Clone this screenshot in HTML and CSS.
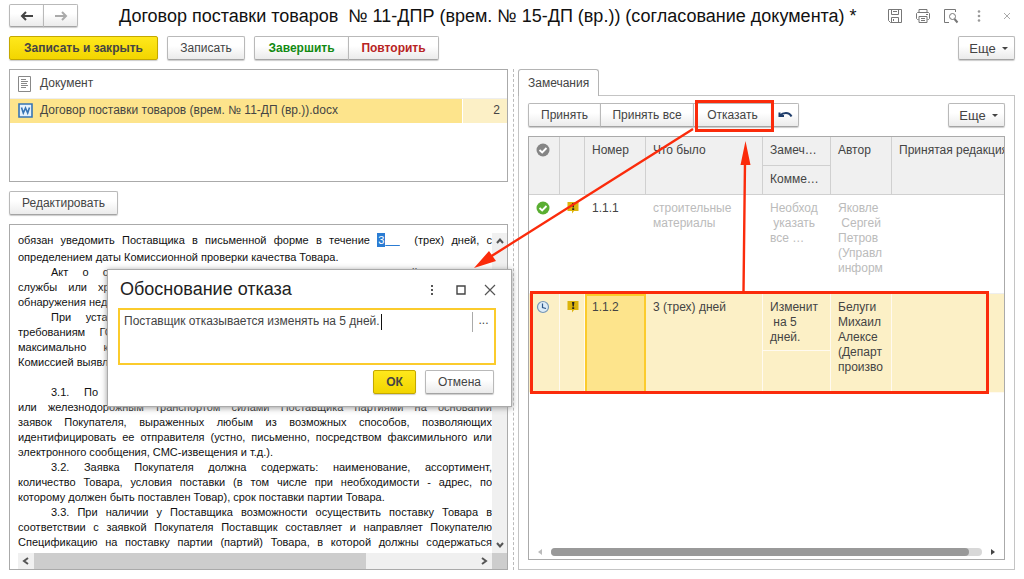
FILE: index.html
```html
<!DOCTYPE html>
<html lang="ru">
<head>
<meta charset="utf-8">
<title>Договор поставки товаров</title>
<link rel="stylesheet" href="styles.css">
</head>
<body>
<div class="page">
  <header class="titlebar">
    <div class="group nav">
      <button class="btn" type="button" aria-label="Назад"><svg width="14" height="10" viewBox="0 0 14 10"><path d="M13 5H3M6 1L2 5l4 4" fill="none" stroke="#444" stroke-width="2"/></svg></button>
      <button class="btn" type="button" aria-label="Вперед"><svg width="14" height="10" viewBox="0 0 14 10"><path d="M1 5h10M8 1l4 4-4 4" fill="none" stroke="#aaa" stroke-width="2"/></svg></button>
    </div>
    <h1 class="title">Договор поставки товаров &nbsp;№ 11-ДПР (врем. № 15-ДП (вр.)) (согласование документа) *</h1>
    <div class="tools">
      <button class="icon-btn" type="button" aria-label="Сохранить"><svg width="16" height="16" viewBox="0 0 16 16" fill="none" stroke="#777"><path d="M1.500 1.500h13v13h-11l-2-2z"/><path d="M4.500 1.500v5h7v-5M6 3.500h4M4.500 14.500v-5h7v5M6.500 11v2"/></svg></button>
      <button class="icon-btn" type="button" aria-label="Печать"><svg width="16" height="16" viewBox="0 0 16 16" fill="none" stroke="#777"><path d="M4 4.500v-3h8v3M3.500 11.500h-1l-1-1v-5l1-1h11l1 1v5l-1 1h-1M4 8.500h8v6H4zM6 10.500h4M6 12.500h4M11 6.500h2"/></svg></button>
      <button class="icon-btn" type="button" aria-label="Просмотр"><svg width="16" height="16" viewBox="0 0 16 16" fill="none" stroke="#777"><path d="M6 14.500H1.500v-13h11V4"/><circle cx="9.500" cy="8.500" r="3"/><path d="M11.500 11l3 3.500" stroke-width="2"/></svg></button>
      <button class="icon-btn" type="button" aria-label="Меню"><svg width="16" height="16" viewBox="0 0 16 16" fill="#999"><circle cx="8" cy="3.500" r="1.300"/><circle cx="8" cy="8" r="1.300"/><circle cx="8" cy="12.500" r="1.300"/></svg></button>
      <button class="icon-btn" type="button" aria-label="Закрыть"><svg width="16" height="16" viewBox="0 0 16 16" stroke="#aaa"><path d="M5 5l6 6M11 5l-6 6"/></svg></button>
    </div>
  </header>

  <div class="toolbar">
    <button class="btn primary wide" type="button">Записать и закрыть</button>
    <button class="btn write" type="button">Записать</button>
    <div class="group">
      <button class="btn finish" type="button">Завершить</button>
      <button class="btn repeat" type="button">Повторить</button>
    </div>
    <button class="btn more" type="button">Еще<i class="caret-down"></i></button>
  </div>

  <main class="main">
    <section class="left">
      <div class="files">
        <table class="file-table">
          <thead><tr>
            <th class="file-icon"><svg width="13" height="16" viewBox="0 0 13 16" fill="none" stroke="#888"><path d="M.5.5h12v15H.5z"/><path d="M3 3.500h5M3 5.500h7M3 7.500h6M3 9.500h7M3 11.500h5"/></svg></th>
            <th>Документ</th><th class="file-count"></th>
          </tr></thead>
          <tbody><tr>
            <td class="file-icon"><svg width="15" height="15" viewBox="0 0 15 15" fill="none" stroke="#3674b5"><path d="M1 1h13v13H1z" fill="#e6f1fb" stroke-width="1.600"/><path d="M3.500 4.500l1.800 5.500 2.200-5 2.200 5 1.800-5.500" stroke-width="1.600"/></svg></td>
            <td>Договор поставки товаров (врем. № 11-ДП (вр.)).docx</td><td class="file-count">2</td>
          </tr></tbody>
        </table>
      </div>
      <button class="btn edit" type="button">Редактировать</button>
      <div class="viewer">
        <div class="doc">
          <p class="lead"><span class="j">обязан уведомить Поставщика в письменной форме в течение <mark>3</mark><u class="mark-tail">&nbsp;&nbsp;</u>&nbsp; (трех) дней, с</span></p>
          <p>определением даты Комиссионной проверки качества Товара.</p>
          <p><span class="j in">Акт о скрытых недостатках составляется отдельно каждой из сторон</span><span class="j">службы или хранения Покупателя в течение десяти рабочих дней с момента</span><span>обнаружения недостатков.</span></p>
          <p><span class="j in">При установлении несоответствия качества Товара и упаковки Товара</span><span class="j">требованиям ГОСТ и условиям настоящего договора Поставщик обязан за</span><span class="j">максимально короткий срок заменить Товар, качество которого признано</span><span>Комиссией выявлены недостатки.</span></p>
          <p class="clause"><span class="j in">3.1. По настоящему Договору поставка осуществляется автомобильным</span><span class="j">или железнодорожным транспортом силами Поставщика партиями на основании</span><span class="j">заявок Покупателя, выраженных любым из возможных способов, позволяющих</span><span class="j">идентифицировать ее отправителя (устно, письменно, посредством факсимильного или</span><span>электронного сообщения, СМС-извещения и т.д.).</span></p>
          <p><span class="j in">3.2. Заявка Покупателя должна содержать: наименование, ассортимент,</span><span class="j">количество Товара, условия поставки (в том числе при необходимости - адрес, по</span><span>которому должен быть поставлен Товар), срок поставки партии Товара.</span></p>
          <p><span class="j in">3.3. При наличии у Поставщика возможности осуществить поставку Товара в</span><span class="j">соответствии с заявкой Покупателя Поставщик составляет и направляет Покупателю</span><span class="j">Спецификацию на поставку партии (партий) Товара, в которой должны содержаться</span></p>
        </div>
        <div class="vbar">
          <svg width="8" height="6" viewBox="0 0 8 6"><path d="M1 5l3-3.500L7 5" fill="none" stroke="#555" stroke-width="2"/></svg>
          <svg width="8" height="6" viewBox="0 0 8 6"><path d="M1 1l3 3.500L7 1" fill="none" stroke="#555" stroke-width="2"/></svg>
        </div>
        <div class="hbar">
          <svg width="16" height="8" viewBox="0 0 16 8"><path d="M10 1L6 4l4 3" fill="none" stroke="#555" stroke-width="2"/></svg>
          <span class="hthumb"></span>
          <svg width="16" height="8" viewBox="0 0 16 8"><path d="M6 1l4 3-4 3" fill="none" stroke="#555" stroke-width="2"/></svg>
        </div>
        <div class="corner"></div>
      </div>
    </section>

    <div class="splitter"></div>

    <section class="right">
      <div class="tabs"><button class="tab" type="button">Замечания</button></div>
      <div class="panel">
        <div class="panel-bar">
          <div class="group">
            <button class="btn accept" type="button">Принять</button>
            <button class="btn accept-all" type="button">Принять все</button>
            <button class="btn refuse" type="button">Отказать</button>
            <button class="btn undo" type="button" aria-label="Отменить"><svg width="15" height="10" viewBox="0 0 15 10"><path d="M1.500 2.500v3.500H6M2 5.500C5 2.500 11 1.500 13.500 6.500" fill="none" stroke="#1f3d6b" stroke-width="2"/></svg></button>
          </div>
          <button class="btn more" type="button">Еще<i class="caret-down"></i></button>
        </div>
        <div class="grid-box">
          <table class="notes">
            <colgroup><col class="c1"><col class="c2"><col class="c3"><col class="c4"><col class="c5"><col class="c6"><col></colgroup>
            <thead>
              <tr><th rowspan="2"><svg width="14" height="14" viewBox="0 0 14 14"><circle cx="7" cy="7" r="6.500" fill="#858585"/><path d="M3.500 7l2.700 2.500L10.500 5" fill="none" stroke="#fff" stroke-width="1.900"/></svg></th><th rowspan="2"></th><th rowspan="2">Номер</th><th rowspan="2">Что было</th><th>Замеч…</th><th rowspan="2">Автор</th><th rowspan="2">Принятая редакция</th></tr>
              <tr><th>Комме…</th></tr>
            </thead>
            <tbody class="done">
              <tr class="upper"><td rowspan="2"><svg width="14" height="14" viewBox="0 0 14 14"><circle cx="7" cy="7" r="6.500" fill="#5aae32"/><path d="M3.500 7l2.700 2.500L10.500 5" fill="none" stroke="#fff" stroke-width="1.900"/></svg></td><td rowspan="2"><svg width="12" height="13" viewBox="0 0 12 13"><path d="M.5 1h11v9H7l-2 2.500V10H.5z" fill="#dcb40c"/><path d="M5 2h2.400L6.800 6.500H5.600zM5.200 7.300h2v1.700h-2z" fill="#222"/></svg></td><td rowspan="2" class="num">1.1.1</td><td rowspan="2">строительные<br>материалы</td><td class="pre">Необход
 указать
все …</td><td rowspan="2" class="pre">Яковле
 Сергей
Петров
(Управл
информ</td><td rowspan="2"></td></tr>
              <tr class="lower"><td></td></tr>
            </tbody>
            <tbody class="current">
              <tr class="upper"><td rowspan="2"><svg width="14" height="14" viewBox="0 0 14 14"><circle cx="7" cy="7" r="5.500" fill="#dcebf7" stroke="#7595b4" stroke-width="1.200"/><path d="M6.500 3.500v4l3.500 1" fill="none" stroke="#2c5688" stroke-width="1.200"/></svg></td><td rowspan="2"><svg width="12" height="13" viewBox="0 0 12 13"><path d="M.5 1h11v9H7l-2 2.500V10H.5z" fill="#dcb40c"/><path d="M5 2h2.400L6.800 6.500H5.600zM5.200 7.300h2v1.700h-2z" fill="#222"/></svg></td><td rowspan="2" class="active">1.1.2</td><td rowspan="2">3 (трех) дней</td><td class="pre">Изменит
 на 5
дней.</td><td rowspan="2" class="pre">Белуги
Михаил
Алексе
(Департ
произво</td><td rowspan="2"></td></tr>
              <tr class="lower"><td></td></tr>
            </tbody>
          </table>
          <div class="scroll">
            <svg width="4" height="6" viewBox="0 0 4 6"><path d="M4 0v6L0 3z" fill="#bbb"/></svg>
            <div class="track"><div class="thumb"></div></div>
            <svg width="4" height="6" viewBox="0 0 4 6"><path d="M0 0v6l4-3z" fill="#444"/></svg>
          </div>
        </div>
      </div>
    </section>
  </main>

  <div class="dialog" role="dialog" aria-labelledby="dlg-title">
    <div class="dialog-head">
      <h2 id="dlg-title">Обоснование отказа</h2>
      <button class="icon-btn" type="button" aria-label="Меню"><svg width="12" height="12" viewBox="0 0 12 12" fill="#555"><path d="M5 1h2v2H5zM5 5h2v2H5zM5 9h2v2H5z"/></svg></button>
      <button class="icon-btn" type="button" aria-label="Развернуть"><svg width="12" height="12" viewBox="0 0 12 12"><path d="M2 2h8v8H2z" fill="none" stroke="#444" stroke-width="1.400"/></svg></button>
      <button class="icon-btn" type="button" aria-label="Закрыть"><svg width="12" height="12" viewBox="0 0 12 12"><path d="M1 1l10 10M11 1L1 11" stroke="#555" stroke-width="1.200"/></svg></button>
    </div>
    <div class="reason">
      <textarea class="reason-text" aria-label="Обоснование отказа" spellcheck="false">Поставщик отказывается изменять на 5 дней.</textarea>
      <span class="cursor"></span>
      <button class="dots" type="button">...</button>
    </div>
    <div class="dialog-foot">
      <button class="btn primary ok" type="button">ОК</button>
      <button class="btn cancel" type="button">Отмена</button>
    </div>
  </div>

  <svg class="callouts" width="1024" height="579" viewBox="0 0 1024 579" fill="none" stroke="#fb2b0b">
    <path d="M696.500 101.500h76v29h-76zM531.500 292.500h456v100h-456z" stroke-width="3"/>
    <path d="M693 129L490 257M743.500 292L745 162" stroke-width="2.400"/>
    <path d="M474 268l15-17 7 10zM745.500 141l-5 24h10z" fill="#fb2b0b" stroke="none"/>
  </svg>
</div>
</body>
</html>
```
FILE: styles.css
```css
* { box-sizing: border-box; }
body { margin: 0; background: #fff; color: #444; font: 12px/15px "Liberation Sans", Arial, sans-serif; }
svg { display: block; }
h1, h2, p { margin: 0; font-weight: normal; }
button, textarea { font: inherit; color: inherit; }

.page { position: relative; display: flex; flex-direction: column; height: 100vh; padding: 4px 9px 9px; overflow: hidden; }
.titlebar { display: flex; align-items: center; height: 23px; }
.title { flex: 1; margin-left: 41px; color: #111; font-size: 18px; line-height: 22px; white-space: nowrap; }
.tools { display: flex; gap: 12px; }
.icon-btn { padding: 0; border: 0; background: none; }

.btn { display: flex; align-items: center; justify-content: center; height: 24px; padding: 0; border: 1px solid #b9b9b9; border-bottom-color: #a4a4a4; border-radius: 2px; background: linear-gradient(#fff 40%, #ebebeb); box-shadow: 0 1px 1px #ccc; white-space: nowrap; }
.group { display: flex; }
.group .btn + .btn { margin-left: -1px; }
.group .btn:not(:last-child) { border-top-right-radius: 0; border-bottom-right-radius: 0; }
.group .btn:not(:first-child) { border-top-left-radius: 0; border-bottom-left-radius: 0; }
.nav .btn { width: 35px; height: 23px; }
.primary { border-color: #c4a800; background: linear-gradient(#ffe81c, #f2d500); font-weight: bold; }
.finish { width: 95px; color: #128a12; font-weight: bold; }
.repeat { width: 91px; color: #b82424; font-weight: bold; }
.more { width: 57px; margin-left: auto; gap: 6px; padding-left: 4px; font-size: 13px; }
.caret-down { border: 3px solid transparent; border-top-color: #444; border-bottom: 0; }

.toolbar { display: flex; gap: 9px; margin-top: 9px; }
.wide { width: 149px; }
.write { width: 78px; }

.main { flex: 1; display: grid; grid-template-columns: 499fr 10px 497fr; min-height: 0; margin-top: 9px; }
.left { display: flex; flex-direction: column; align-items: flex-start; gap: 9px; min-width: 0; min-height: 0; }
.files { width: 100%; height: 113px; border: 1px solid #aaa; }
.file-table { width: 100%; border-collapse: collapse; }
.file-table th { height: 28px; padding: 0; border-bottom: 1px solid #eee; font-weight: normal; text-align: left; }
.file-table td { height: 25px; padding: 0; background: #fde48c; }
.file-table .file-icon { width: 30px; padding-left: 8px; }
.file-table .file-count { width: 45px; padding-right: 7px; text-align: right; }
.file-table td.file-count { background: #fcf0c6; border-left: 1px solid #fff; }
.edit { width: 109px; }

.viewer { flex: 1; display: grid; grid-template-columns: 1fr 15px; grid-template-rows: 1fr 16px; width: 100%; min-height: 0; padding: 8px 0 0 8px; border: 1px solid #aaa; }
.doc { min-height: 0; overflow: hidden; color: #111; font-size: 11px; white-space: nowrap; }
.doc span { display: block; }
.doc .j { text-align-last: justify; }
.doc .j { white-space: normal; }
.doc .in { padding-left: 33px; }
.doc .lead { padding-bottom: 2px; }
.doc .clause { margin-top: 15px; }
mark { padding: 1px; background: #2b7cd3; color: #fff; }
.mark-tail { color: #2b7cd3; }
.vbar { display: flex; flex-direction: column; align-items: center; justify-content: space-between; padding: 5px 0; background: #f0f0f0; }
.hbar { display: flex; align-items: center; background: #f0f0f0; }
.hthumb { width: 70%; height: 100%; margin-right: auto; background: #cdcdcd; }
.corner { background: #cdcdcd; }

.splitter { justify-self: center; border-left: 1px dashed #bbb; }

.right { display: flex; flex-direction: column; min-width: 0; min-height: 0; }
.tabs { display: flex; }
.tab { position: relative; height: 27px; margin-bottom: -1px; padding: 0 9px; border: 1px solid #b4b4b4; border-bottom: 0; border-radius: 3px 3px 0 0; background: #fff; }
.panel { flex: 1; display: flex; flex-direction: column; gap: 9px; min-height: 0; padding: 7px 9px 9px; border: 1px solid #c4c4c4; }
.panel-bar { display: flex; }
.accept { width: 73px; }
.accept-all { width: 94px; }
.refuse { width: 79px; }
.undo { width: 28px; }
.grid-box { flex: 1; display: flex; flex-direction: column; justify-content: space-between; min-height: 0; border: 1px solid #aaa; }
.notes { width: 100%; table-layout: fixed; border-collapse: separate; border-spacing: 0; }
.c1 { width: 31px; } .c2 { width: 25px; } .c3 { width: 61px; } .c4 { width: 117px; } .c5 { width: 68px; } .c6 { width: 61px; }
.notes th, .notes td { padding: 6px 0 0 7px; overflow: hidden; font-weight: normal; text-align: left; vertical-align: top; white-space: nowrap; }
.notes th { height: 29px; border-right: 1px solid #d0d0d0; border-bottom: 1px solid #d0d0d0; background: #f0f0f0; }
.notes tr:first-child > :last-child { border-right: 0; }
.notes .pre { white-space: pre; }
.done { color: #bbb; }
.done .num { color: #444; }
.upper .pre { height: 57px; }
.lower td { height: 42px; }
.done tr.upper td[rowspan], .done .lower td { border-bottom: 1px solid #eee; }
.current td { border-right: 1px solid #fffaf0; border-bottom: 1px solid #fffaf0; background: #fcf0c6; }
.current .active { padding: 4px 0 0 5px; border: 2px solid #fbcb2c; background: #fde48c; }
.scroll { display: flex; align-items: center; gap: 9px; padding: 0 9px 3px; }
.track { flex: 1; border-radius: 4px; background: #d8d8d8; }
.thumb { width: 97%; height: 8px; border-radius: 4px; background: #999; }

.dialog { position: absolute; left: 107px; top: 269px; width: 405px; padding: 10px 15px 12px 10px; border: 1px solid #aaa; background: #fff; box-shadow: 0 1px 6px #999; }
.dialog-head { display: flex; align-items: center; gap: 17px; height: 19px; margin-bottom: 9px; }
.dialog-head h2 { flex: 1; padding-left: 2px; color: #222; font-size: 18px; }
.reason { position: relative; display: flex; align-items: flex-start; height: 57px; border: 2px solid #fbcb2c; }
.reason-text { flex: 1; height: 100%; padding: 4px; border: 0; outline: 0; resize: none; overflow: hidden; background: transparent; }
.cursor { position: absolute; left: 261px; top: 4px; width: 1px; height: 16px; background: #111; }
.dots { width: 22px; height: 20px; margin-top: 2px; padding: 0 0 4px; border: 0; border-left: 1px solid #aaa; background: none; }
.dialog-foot { display: flex; justify-content: flex-end; gap: 9px; margin-top: 5px; padding-right: 2px; }
.ok { width: 43px; }
.cancel { width: 69px; }

.callouts { position: absolute; left: 0; top: 0; pointer-events: none; }
```
